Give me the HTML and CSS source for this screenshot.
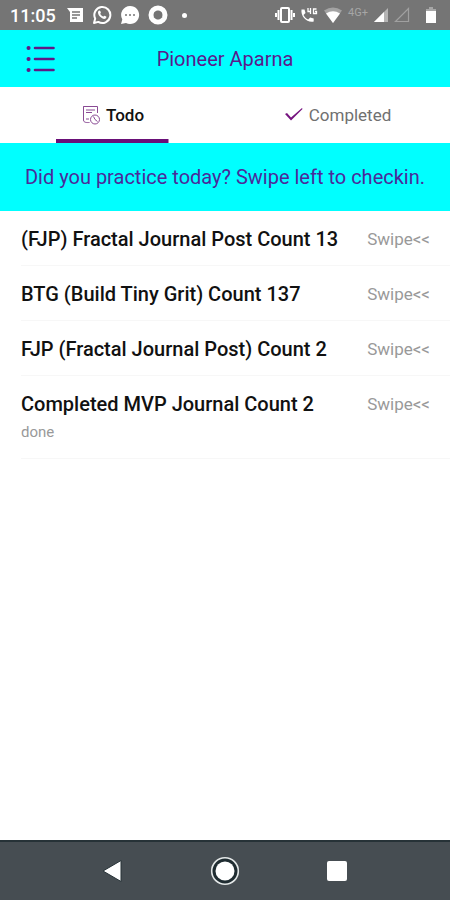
FILE: index.html
```html
<!DOCTYPE html>
<html lang="en">
<head>
    <meta charset="UTF-8">
    <meta name="viewport" content="width=device-width, initial-scale=1.0">
    <title>Pioneer Aparna</title>
    <link rel="stylesheet" href="styles.css">
</head>
<body>
    <!-- Status Bar -->
    <div class="status-bar">
        <div class="status-left">
            <span class="clock">11:05</span>
            <svg width="18" height="18" viewBox="0 0 18 18">
                <path d="M1 2h16v14H4V6z" fill="#fff"/>
                <path d="M6 6h8M6 9h8M6 12h5" stroke="#757575" stroke-width="1.4"/>
            </svg>
            <svg width="20" height="20" viewBox="0 0 20 20">
                <path d="M2 18l1.2-4.4A8 8 0 1 1 6.300 16.900z" fill="none" stroke="#fff" stroke-width="2" stroke-linejoin="round"/>
                <path d="M6.300 6.200c.6-1 1.700-.8 2-.1l.6 1.500c.1.500-.7 1-.6 1.400.7 1.300 1.500 2 2.800 2.600.4.100.9-1 1.400-.9l1.700.8c.5.500 0 1.700-.7 2.100-1.500.8-3.800-.2-5.400-1.800S5.400 7.900 6.300 6.200z" fill="#fff"/>
            </svg>
            <svg width="20" height="20" viewBox="0 0 20 20">
                <path d="M10 1a9 9 0 1 1-4 17L1 19l1.300-4.500A9 9 0 0 1 10 1z" fill="#fff"/>
                <g fill="#757575"><circle cx="6" cy="10" r="1"/><circle cx="10" cy="10" r="1"/><circle cx="14" cy="10" r="1"/></g>
            </svg>
            <svg width="20" height="20" viewBox="0 0 20 20">
                <circle cx="10" cy="10" r="7" fill="none" stroke="#fff" stroke-width="5"/>
                <path d="M10 5.500l1.200 2.100 2.700-.1-.6 2.500 1.100 2.500-2.700.2L10 14.500l-1.500-1.800-2.800-.2 1-2.500-.7-2.500 2.800.1z" fill="#757575"/>
            </svg>
            <span class="dot"></span>
        </div>
        <div class="status-right">
            <svg width="20" height="18" viewBox="0 0 20 18">
                <rect x="6" y="2" width="8" height="14" rx="1" fill="none" stroke="#fff" stroke-width="2"/>
                <path d="M3.500 4v10M16.500 4v10" stroke="#fff" stroke-width="2"/>
                <path d="M1 7v4M19 7v4" stroke="#fff" stroke-width="2"/>
            </svg>
            <svg width="18" height="18" viewBox="0 0 18 18">
                <path d="M1.500 3.500h3l1 3.500-2 2c1.200 2.300 2.500 3.500 4.700 4.600l2-2 3.500.9v3C7 17 .5 10.500 1.500 3.500z" fill="#fff"/>
                <path d="M8 2v3.500h3M10.500 2v6M16.500 3h-3v4.500h3V5.500h-1.500" fill="none" stroke="#fff" stroke-width="1.300"/>
            </svg>
            <svg width="20" height="18" viewBox="0 0 20 18">
                <path d="M1 4.500Q10-1.500 19 4.500L10 17z" fill="#a3a3a3"/>
                <path d="M3 7.500Q10 3 17 7.500L10 17z" fill="#fff"/>
            </svg>
            <span class="network">4G+</span>
            <svg width="16" height="16" viewBox="0 0 16 16">
                <path d="M15 1v14H1z" fill="#b5b5b5"/>
                <path d="M11 5v10H1z" fill="#fff"/>
            </svg>
            <svg width="16" height="16" viewBox="0 0 16 16">
                <path d="M14.500 1.500v13h-13z" fill="none" stroke="#a0a0a0" stroke-width="1.200"/>
            </svg>
            <svg class="battery" width="12" height="18" viewBox="0 0 12 18">
                <path d="M4 1h4v2h3v3H1V3h3z" fill="#a6a6a6"/>
                <path d="M1 5h10v12H1z" fill="#fff"/>
            </svg>
        </div>
    </div>

    <!-- Header -->
    <header class="header">
        <button type="button" class="menu-button" aria-label="Menu">
            <svg width="30" height="28" viewBox="0 0 30 28" stroke="#5f1a86" stroke-width="2.600" stroke-linecap="round">
                <path d="M9 3h18.500M9 14h18.500M9 25h18.500"/>
                <path d="M2.500 3h.1M2.500 14h.1M2.500 25h.1" stroke-width="4"/>
            </svg>
        </button>
        <h1>Pioneer Aparna</h1>
    </header>

    <!-- Tabs -->
    <nav class="tabs">
        <button type="button" class="tab active">
            <svg width="20" height="20" viewBox="0 0 20 20" fill="none" stroke="#8a4a94">
                <path d="M16.500 8V1.500h-14V15c0 3 4 2.500 6 2.500M2.500 1.500v3"/>
                <path d="M5 5h9M5 7.500h6M5 14h3"/>
                <circle cx="14" cy="14.500" r="4.500"/>
                <path d="M12.500 11.500L14 14.500l2.500 2"/>
            </svg>
            <span>Todo</span>
        </button>
        <button type="button" class="tab">
            <svg width="20" height="20" viewBox="0 0 20 20">
                <path d="M1 9l2-1 4 4.500L18 3l.5 1L7 15.500z" fill="#771580"/>
            </svg>
            <span>Completed</span>
        </button>
    </nav>

    <p class="banner">Did you practice today? Swipe left to checkin.</p>

    <!-- Todo List -->
    <main class="content">
        <ul class="todo-list">
            <li class="todo-item">
                <h2>(FJP) Fractal Journal Post Count 13</h2>
                <span class="swipe">Swipe&lt;&lt;</span>
            </li>
            <li class="todo-item">
                <h2>BTG (Build Tiny Grit) Count 137</h2>
                <span class="swipe">Swipe&lt;&lt;</span>
            </li>
            <li class="todo-item">
                <h2>FJP (Fractal Journal Post) Count 2</h2>
                <span class="swipe">Swipe&lt;&lt;</span>
            </li>
            <li class="todo-item">
                <div>
                    <h2>Completed MVP Journal Count 2</h2>
                    <p class="note">done</p>
                </div>
                <span class="swipe">Swipe&lt;&lt;</span>
            </li>
        </ul>
    </main>

    <!-- Navigation Bar -->
    <footer class="nav-bar">
        <button type="button" aria-label="Back">
            <svg width="30" height="30" viewBox="0 0 30 30">
                <path d="M5 15L23 4.500v21z" fill="#fff" stroke="#263237" stroke-width="1"/>
            </svg>
        </button>
        <button type="button" aria-label="Home">
            <svg width="30" height="30" viewBox="0 0 30 30">
                <circle cx="15" cy="15" r="13.300" fill="#1f2c31" stroke="#e4e8e8" stroke-width="1.600"/>
                <circle cx="15" cy="15" r="9.500" fill="#fff"/>
            </svg>
        </button>
        <button type="button" aria-label="Recent apps">
            <svg width="30" height="30" viewBox="0 0 30 30">
                <rect x="5" y="5" width="20" height="20" rx="2" fill="#fff"/>
            </svg>
        </button>
    </footer>
</body>
</html>
```

FILE: styles.css
```css
* {
    box-sizing: border-box;
}
body {
    display: flex;
    flex-direction: column;
    min-height: 100vh;
    margin: 0;
    font-family: Roboto, "Liberation Sans", sans-serif;
    background-color: #fff;
}
h1, h2, p, ul {
    margin: 0;
    padding: 0;
}
button {
    padding: 0;
    border: none;
    background: none;
    font-family: inherit;
    cursor: pointer;
}
svg {
    display: block;
    flex-shrink: 0;
}

/* Status Bar */
.status-bar {
    display: flex;
    justify-content: space-between;
    align-items: center;
    height: 30px;
    padding: 0 13px 0 10px;
    background-color: #757575;
    color: #fff;
}
.status-left,
.status-right {
    display: flex;
    align-items: center;
    gap: 8px;
}
.status-right {
    gap: 5px;
}
.clock {
    margin-right: 2px;
    font-size: 18px;
    font-weight: 500;
}
.dot {
    width: 5px;
    height: 5px;
    margin-left: 6px;
    border-radius: 50%;
    background-color: #fff;
}
.network {
    align-self: flex-start;
    font-size: 11px;
    line-height: 14px;
    color: #a6a6a6;
}
.battery {
    margin-left: 10px;
}

/* Header */
.header {
    display: grid;
    grid-template-columns: 30px 1fr 30px;
    align-items: center;
    height: 57px;
    padding: 0 26px;
    background-color: #00ffff;
}
.header h1 {
    font-size: 20px;
    font-weight: 400;
    text-align: center;
    color: #5a1a8c;
}

/* Tabs */
.tabs {
    display: flex;
    height: 56px;
}
.tab {
    display: flex;
    flex: 1;
    justify-content: center;
    align-items: center;
    gap: 5px;
    font-size: 17px;
    color: #707070;
}
.tab.active {
    font-weight: 500;
    color: #111;
    background: linear-gradient(#6a0f78, #6a0f78) center bottom / 50% 4px no-repeat;
}

.banner {
    padding: 22px 16px;
    font-size: 20px;
    line-height: 24px;
    text-align: center;
    color: #4b2a9a;
    background-color: #00ffff;
}

/* Todo List */
.content {
    flex: 1;
}
.todo-list {
    list-style: none;
    padding-left: 21px;
}
.todo-item {
    display: flex;
    justify-content: space-between;
    padding: 16px 20px 14px 0;
    border-bottom: 1px solid #f7f7f7;
    line-height: 24px;
}
.todo-item h2 {
    font-size: 20px;
    font-weight: 500;
    color: #111;
}
.swipe {
    font-size: 17px;
    color: #999;
}
.note {
    padding-top: 5px;
    font-size: 15px;
    line-height: 23px;
    color: #999;
}

/* Navigation Bar */
.nav-bar {
    display: flex;
    height: 60px;
    padding: 0 57px;
    border-top: 2px solid #263237;
    background-color: #464d52;
}
.nav-bar button {
    display: flex;
    flex: 1;
    justify-content: center;
    align-items: center;
}
```
